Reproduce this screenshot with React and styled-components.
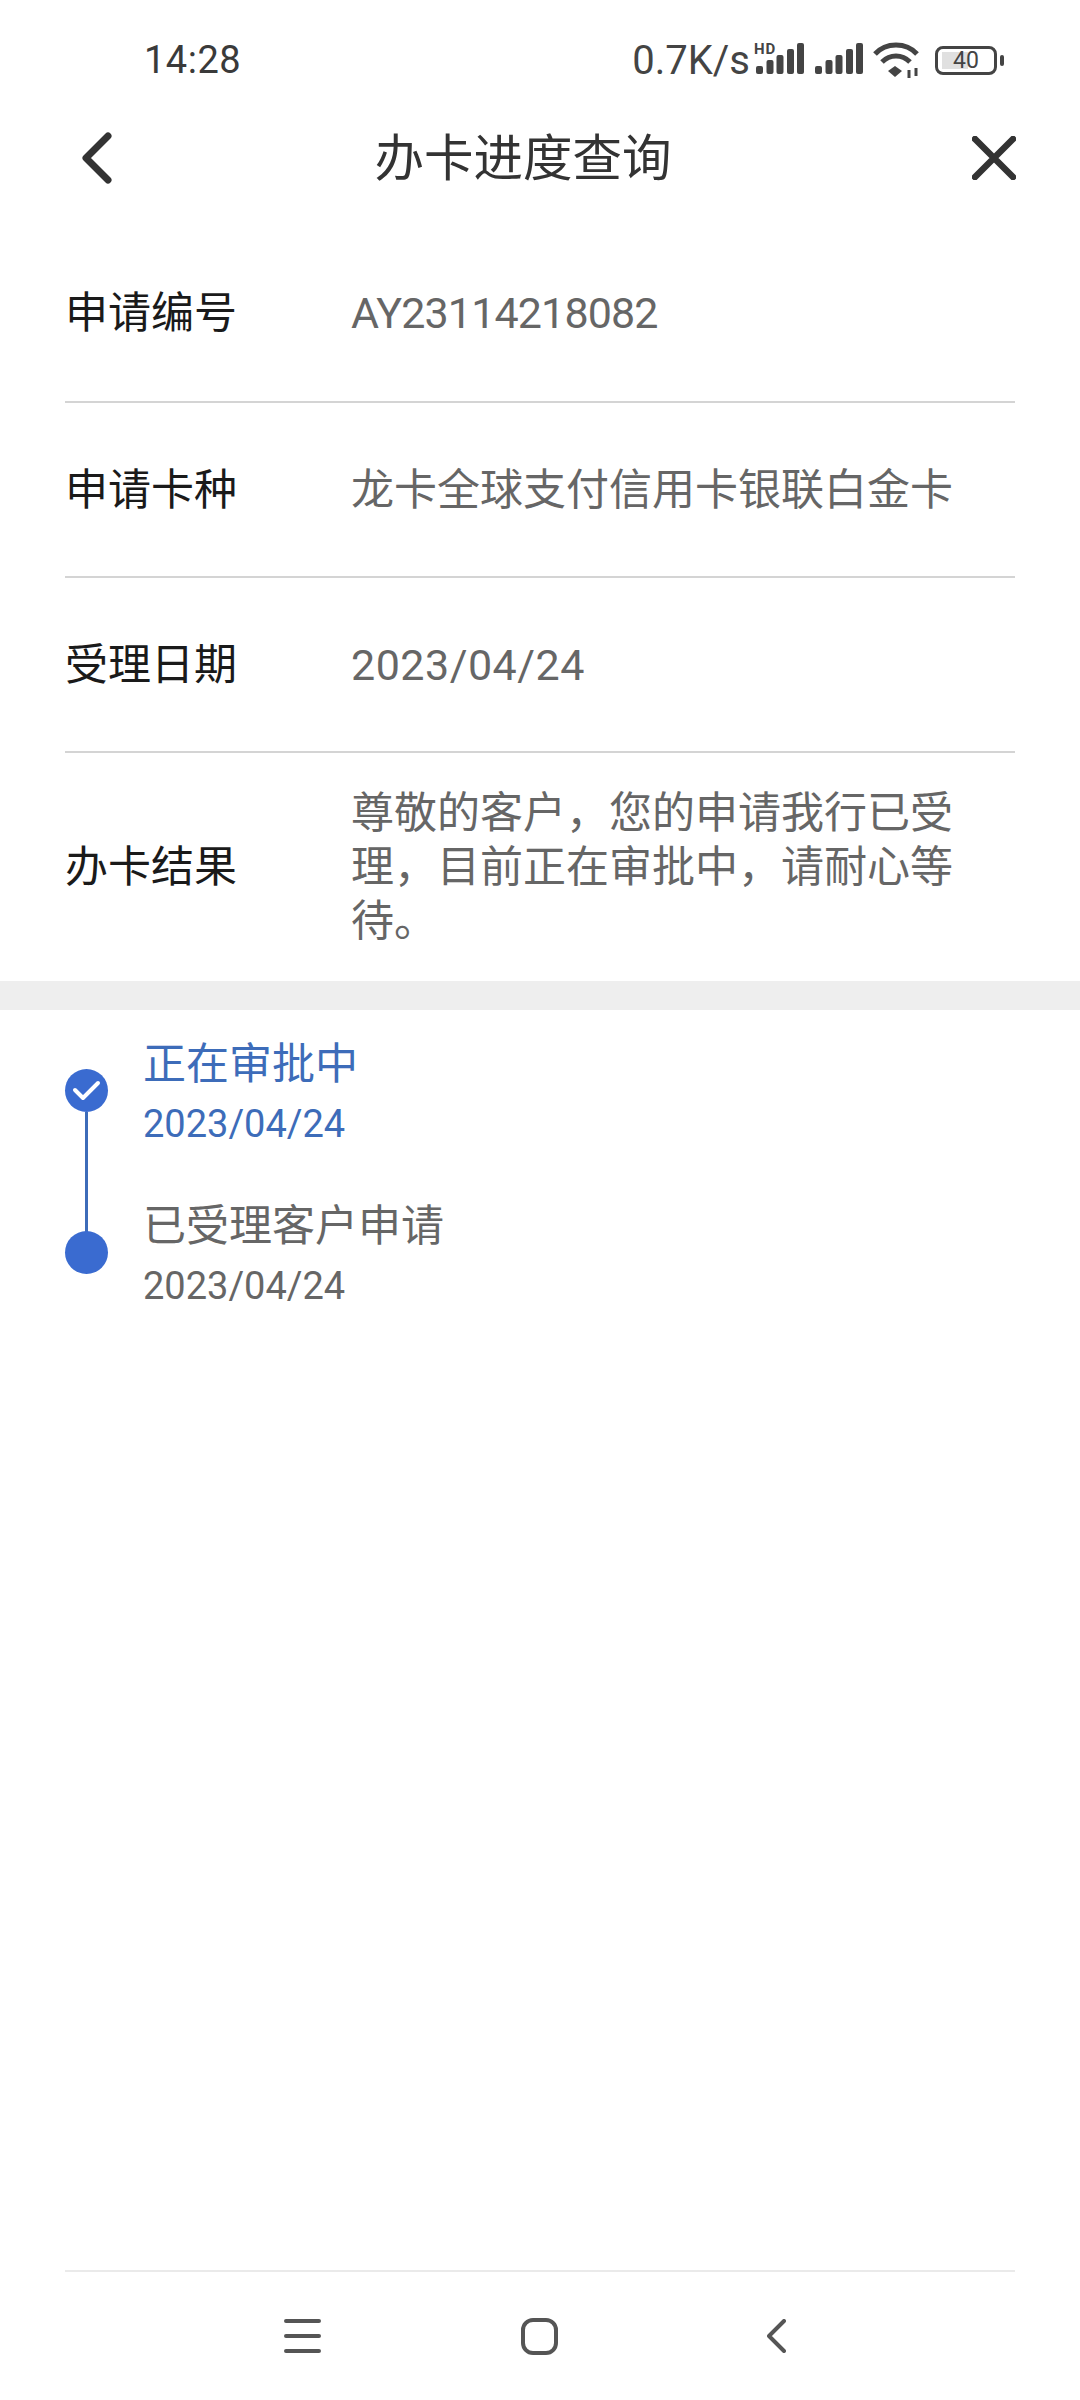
import styled, { createGlobalStyle } from "styled-components";

const GlobalStyle = createGlobalStyle`
  html, body { margin: 0; padding: 0; background: #fff; }
  body { font-family: Roboto, "Noto Sans CJK SC", sans-serif; }
`;

const rows = [
  { label: "申请编号", value: "AY23114218082", tracking: -0.85 },
  { label: "申请卡种", value: "龙卡全球支付信用卡银联白金卡", tracking: 0 },
  { label: "受理日期", value: "2023/04/24", tracking: 0.5 },
];

const steps = [
  { title: "正在审批中", date: "2023/04/24", active: true },
  { title: "已受理客户申请", date: "2023/04/24", active: false },
];

const SignalBars = ({ x = 0 }) => (
  <g transform={`translate(${x} 0)`} fill="#444">
    <rect x="0" y="24" width="7" height="8" rx="2" />
    <rect x="10.5" y="18" width="7" height="14" rx="2" />
    <rect x="20.5" y="13" width="7" height="19" rx="2" />
    <rect x="31" y="7" width="7" height="25" rx="2" />
    <rect x="41" y="1" width="7" height="31" rx="2" />
  </g>
);

const HdSignal = () => (
  <svg width="52" height="42" viewBox="0 -3 52 42">
    <text x="0" y="12" fontFamily="Roboto" fontWeight="700" fontSize="15" letterSpacing="1" fill="#444">HD</text>
    <SignalBars x="2" />
  </svg>
);

const Signal = () => (
  <svg width="49" height="36" viewBox="0 0 49 36">
    <SignalBars />
  </svg>
);

const Wifi = () => (
  <svg width="48" height="38" viewBox="0 0 48 38" fill="none" stroke="#444" strokeWidth="5">
    <path d="M2 13C13 1 33 1 44 13" />
    <path d="M9 21C17 13 29 13 37 21" />
    <path d="M22 25l7 5-7 6-7-6z" fill="#444" stroke="none" />
    <path d="M36 29v8M43 27v8" strokeWidth="3" />
  </svg>
);

const BatteryIcon = () => (
  <Battery>
    <BatteryFill />
    <BatteryText>40</BatteryText>
    <BatteryCap />
  </Battery>
);

const Chevron = () => (
  <svg width="36" height="52" viewBox="0 0 36 52" fill="none" stroke="#333" strokeWidth="7" strokeLinecap="round" strokeLinejoin="round">
    <path d="M30 4L8 26l22 22" />
  </svg>
);

const Cross = () => (
  <svg width="44" height="44" viewBox="0 0 44 44" fill="none" stroke="#333" strokeWidth="6.5" strokeLinecap="round">
    <path d="M3 3l38 38M41 3L3 41" />
  </svg>
);

const Check = () => (
  <svg width="29" height="21" viewBox="0 0 29 21" fill="none" stroke="#fff" strokeWidth="4" strokeLinecap="round" strokeLinejoin="round">
    <path d="M3 10l8 8L26 3" />
  </svg>
);

const MenuIcon = () => (
  <svg width="37" height="34" viewBox="0 0 37 34" fill="none" stroke="#555" strokeWidth="4" strokeLinecap="round">
    <path d="M2 2h33M2 17h33M2 32h33" />
  </svg>
);

const HomeIcon = () => (
  <svg width="46" height="37" viewBox="0 0 46 37" fill="none" stroke="#555" strokeWidth="4">
    <rect x="2" y="2" width="33" height="33" rx="10" />
  </svg>
);

const BackIcon = () => (
  <svg width="19" height="34" viewBox="0 0 19 34" fill="none" stroke="#555" strokeWidth="4" strokeLinecap="round" strokeLinejoin="round">
    <path d="M17 2L2 17l15 15" />
  </svg>
);

const App = () => (
  <Page>
    <GlobalStyle />
    <StatusBar>
      <Time>14:28</Time>
      <StatusRight>
        <Speed>0.7K/s</Speed>
        <HdSignal />
        <Signal />
        <Wifi />
        <BatteryIcon />
      </StatusRight>
    </StatusBar>
    <Header>
      <HeaderIcon><Chevron /></HeaderIcon>
      <Title>办卡进度查询</Title>
      <HeaderIcon><Cross /></HeaderIcon>
    </Header>
    <Info>
      {rows.map((row) => (
        <InfoRow key={row.label}>
          <Label>{row.label}</Label>
          <Value $tracking={row.tracking}>{row.value}</Value>
        </InfoRow>
      ))}
      <ResultRow>
        <Label>办卡结果</Label>
        <Value>尊敬的客户，您的申请我行已受理，目前正在审批中，请耐心等待。</Value>
      </ResultRow>
    </Info>
    <Band />
    <Timeline>
      {steps.map((step, i) => (
        <Step key={step.title}>
          <Marker>
            <Dot>{step.active && <Check />}</Dot>
            {i < steps.length - 1 && <Line />}
          </Marker>
          <StepText $active={step.active}>
            <StepTitle>{step.title}</StepTitle>
            <StepDate>{step.date}</StepDate>
          </StepText>
        </Step>
      ))}
    </Timeline>
    <NavBar>
      <MenuIcon />
      <HomeIcon />
      <BackIcon />
    </NavBar>
  </Page>
);

const Page = styled.div`
  width: 1080px;
  height: 2400px;
  display: flex;
  flex-direction: column;
  background: #fff;
  overflow: hidden;
`;

const StatusBar = styled.div`
  height: 120px;
  padding: 0 83px 0 144px;
  display: flex;
  align-items: center;
  justify-content: space-between;
  color: #444;
  box-sizing: border-box;
`;

const Time = styled.span`
  font-size: 38px;
  font-weight: 400;
  letter-spacing: 0.5px;
  color: #3a3a3a;
`;

const StatusRight = styled.div`
  display: flex;
  align-items: center;
  svg + svg {
    margin-left: 9px;
  }
`;

const Speed = styled.span`
  font-size: 40px;
  margin-right: 4px;
`;

const Battery = styled.div`
  position: relative;
  box-sizing: border-box;
  width: 62px;
  height: 29px;
  margin-left: 14px;
  border: 3px solid #444;
  border-radius: 8px;
  display: flex;
  align-items: center;
  justify-content: center;
`;

const BatteryFill = styled.div`
  position: absolute;
  left: 4px;
  top: 3px;
  bottom: 3px;
  width: 26px;
  background: #e0e0e0;
`;

const BatteryText = styled.span`
  position: relative;
  font-size: 23px;
  line-height: 1;
  color: #444;
`;

const BatteryCap = styled.div`
  position: absolute;
  right: -10px;
  top: 6px;
  width: 4px;
  height: 11px;
  border-radius: 2px;
  background: #444;
`;

const Header = styled.div`
  height: 76px;
  padding: 0 64px 0 78px;
  display: flex;
  align-items: center;
  justify-content: space-between;
`;

const HeaderIcon = styled.div`
  display: flex;
  align-items: center;
`;

const Title = styled.h1`
  margin: 2px 40px 0 0;
  font-size: 49.5px;
  line-height: 60px;
  font-weight: 400;
  color: #333;
`;

const Info = styled.div`
  padding: 0 65px;
`;

const InfoRow = styled.div`
  height: 175px;
  box-sizing: border-box;
  display: flex;
  align-items: center;
  border-bottom: 2px solid #d4d4d4;
  &:first-child {
    height: 207px;
    padding-top: 28px;
  }
`;

const ResultRow = styled.div`
  height: 228px;
  display: flex;
  align-items: center;
`;

const Label = styled.div`
  width: 286px;
  flex: none;
  font-size: 43px;
  line-height: 54px;
  color: #1a1a1a;
`;

const Value = styled.div`
  flex: 1;
  padding-right: 50px;
  font-size: 43px;
  line-height: 54px;
  letter-spacing: ${(props) => props.$tracking || 0}px;
  color: #666;
`;

const Band = styled.div`
  height: 29px;
  background: #eee;
`;

const Timeline = styled.div`
  flex: 1;
  padding: 22px 65px 0;
`;

const Step = styled.div`
  height: 162px;
  display: flex;
`;

const Marker = styled.div`
  width: 78px;
  flex: none;
  padding-top: 37px;
  position: relative;
`;

const Dot = styled.div`
  width: 43px;
  height: 43px;
  border-radius: 50%;
  background: #3a6bd0;
  display: flex;
  align-items: center;
  justify-content: center;
  position: relative;
  z-index: 1;
`;

const Line = styled.div`
  position: absolute;
  left: 20px;
  top: 80px;
  width: 3px;
  height: 120px;
  background: #3d6cb9;
`;

const StepText = styled.div`
  color: ${(props) => (props.$active ? "#3d6cb9" : "#666")};
`;

const StepTitle = styled.div`
  font-size: 43px;
  line-height: 64px;
`;

const StepDate = styled.div`
  font-size: 38px;
  line-height: 56px;
`;

const NavBar = styled.div`
  box-sizing: border-box;
  height: 130px;
  margin: 0 65px;
  padding: 0 229px 0 219px;
  border-top: 2px solid #eaeaea;
  display: flex;
  align-items: center;
  justify-content: space-between;
`;

export default App;
